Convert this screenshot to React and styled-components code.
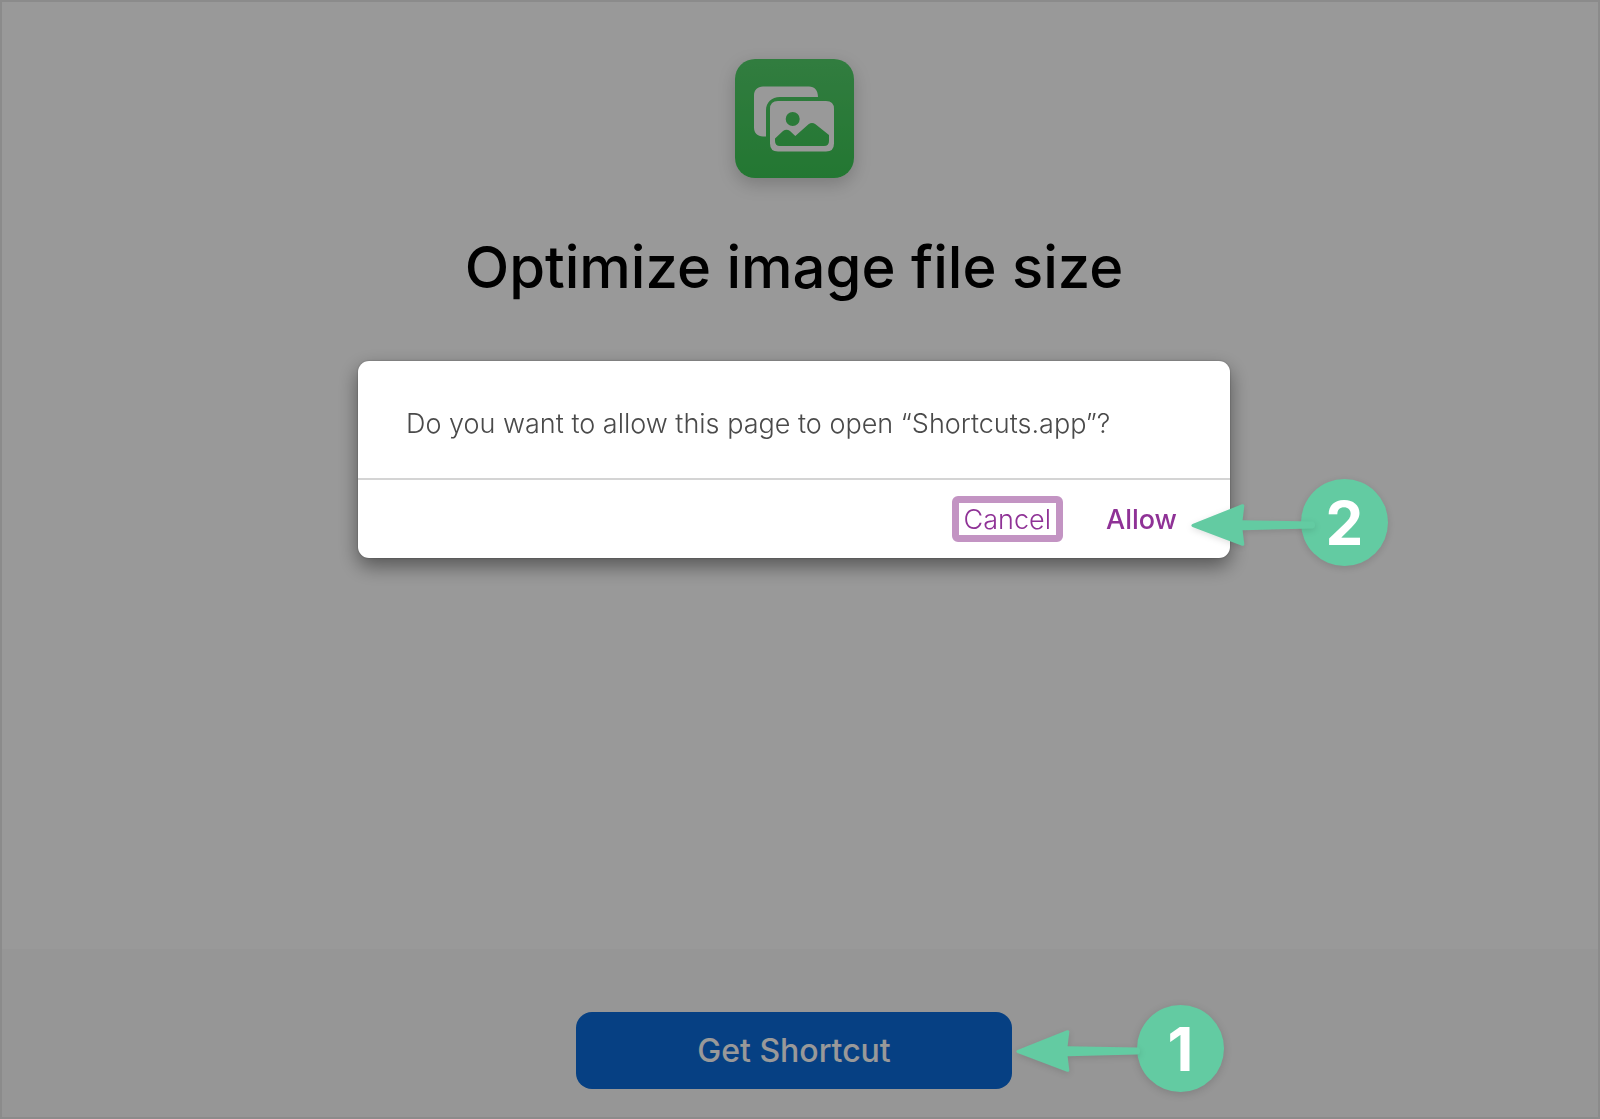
import React from "react";
import styled, { createGlobalStyle } from "styled-components";

const GlobalStyle = createGlobalStyle`
  *, *::before, *::after { box-sizing: border-box; }
  body {
    margin: 0;
    font-family: Inter, "Liberation Sans", sans-serif;
    background: #fff;
  }
`;

const MARK = "#63cba2";

const Page = styled.div`
  min-height: 100vh;
  display: flex;
  flex-direction: column;
  border: 2px solid #e8e8e8;
`;

const Main = styled.main`
  flex: 1;
  display: flex;
  flex-direction: column;
  align-items: center;
  gap: 51px;
  padding: 57px 14px 0 2px;
`;

const AppTile = styled.div`
  width: 119px;
  height: 119px;
  border-radius: 20px;
  background: linear-gradient(#53d06a, #3bc754);
  box-shadow: 0 6px 18px rgba(0, 0, 0, 0.2);
`;

const Title = styled.h1`
  margin: 0;
  font-size: 58px;
  line-height: 76px;
  font-weight: 500;
  color: #000;
  text-align: center;
`;

const Footer = styled.footer`
  display: flex;
  justify-content: center;
  padding: 63px 14px 28px 2px;
  background: #fafafa;
`;

const Anchor = styled.div`
  position: relative;
`;

const PrimaryButton = styled.button`
  width: 436px;
  height: 77px;
  border: 0;
  border-radius: 16px;
  background: #0a6bda;
  color: #fff;
  font: 500 32px/40px Inter, "Liberation Sans", sans-serif;
`;

const Backdrop = styled.div`
  position: fixed;
  inset: 0;
  z-index: 1;
  display: flex;
  justify-content: center;
  align-items: flex-start;
  padding: 361px 12px 0 0;
  background: rgba(0, 0, 0, 0.4);
`;

const Dialog = styled.div`
  position: relative;
  width: 872px;
  border-radius: 11px;
  background: #fff;
  box-shadow: 0 0 2px rgba(0, 0, 0, 0.35), 0 8px 20px rgba(0, 0, 0, 0.45);
`;

const Message = styled.p`
  margin: 0;
  padding: 45px 48px 36px;
  font-size: 27px;
  line-height: 36px;
  font-weight: 350;
  color: #4a4a4a;
`;

const Actions = styled.div`
  display: flex;
  justify-content: flex-end;
  gap: 31px;
  padding: 16px 41px 16px 48px;
  border-top: 2px solid #d4d4d4;
`;

const DialogButton = styled.button`
  height: 46px;
  padding: 2px 5px 0;
  border: 7px solid ${(p) => (p.$focused ? "#c394c3" : "transparent")};
  border-radius: 6px;
  background: transparent;
  color: #8f3296;
  font: ${(p) => (p.$strong ? 500 : 350)} 27px/30px Inter, "Liberation Sans", sans-serif;
  outline: none;
`;

const Callout = styled.div`
  position: absolute;
  z-index: 2;
  left: ${(p) => p.$left};
  top: ${(p) => p.$top};
  display: flex;
  align-items: center;
`;

const ArrowShape = styled.svg`
  position: relative;
  flex: none;
  display: block;
  z-index: 1;
  margin-right: ${(p) => p.$overlap};
  overflow: visible;
  filter: drop-shadow(0 2px 3px rgba(0, 0, 0, 0.12));
`;

const Badge = styled.span`
  flex: none;
  width: 87px;
  height: 87px;
  border-radius: 50%;
  display: grid;
  place-items: center;
  background: ${MARK};
  box-shadow: 0 2px 8px rgba(0, 0, 0, 0.15);
  color: #fff;
  font-size: 60px;
  line-height: 72px;
  font-weight: 700;
`;

function PhotosIcon() {
  return (
    <svg width="119" height="119" viewBox="0 0 119 119" aria-hidden="true">
      <path
        fill="#fff"
        d="M28 27.500H74C79.500 27.500 83 31.500 83 38H45C36.500 38 31 43.500 31 51.500V77.500H28C22.500 77.500 19 74 19 68.500V36.500C19 31 22.500 27.500 28 27.500Z"
      />
      <path
        fill="#fff"
        fillRule="evenodd"
        d="M43 42H91Q99 42 99 50V84.500Q99 92.500 91 92.500H43Q35 92.500 35 84.500V50Q35 42 43 42ZM57.700 53A7 7 0 1 0 57.700 67A7 7 0 1 0 57.700 53ZM40 79.500V82Q40 87 45 87H89Q94 87 94 82V76L80.500 65.200Q77 62.800 73.500 65.200L60.300 77L55 72Q51.500 69.500 48 72Z"
      />
    </svg>
  );
}

function Arrow({ overlap }) {
  return (
    <ArrowShape $overlap={overlap} width="124" height="44" viewBox="0 -2 124 44" aria-hidden="true">
      <path
        fill={MARK}
        d="M1.500 21L51 1.300Q53.500 .6 53.300 3L51.600 17.200L121 18.500Q124 18.700 124 22Q124 25.300 121 25.500L51.600 27.200L53.300 41Q53.500 43.400 51 42.700L1.500 24Q-.8 22.500 1.500 21Z"
      />
    </ArrowShape>
  );
}

export default function App() {
  return (
    <>
      <GlobalStyle />
      <Page>
        <Main>
          <AppTile>
            <PhotosIcon />
          </AppTile>
          <Title>Optimize image file size</Title>
        </Main>
        <Footer>
          <Anchor>
            <PrimaryButton type="button">Get Shortcut</PrimaryButton>
            <Callout $left="calc(100% + 4px)" $top="-7px">
              <Arrow overlap="-3px" />
              <Badge>1</Badge>
            </Callout>
          </Anchor>
        </Footer>
      </Page>
      <Backdrop>
        <Dialog role="dialog" aria-modal="true" aria-labelledby="dialog-message">
          <Message id="dialog-message">
            Do you want to allow this page to open “Shortcuts.app”?
          </Message>
          <Actions>
            <DialogButton type="button" $focused>Cancel</DialogButton>
            <DialogButton type="button" $strong>Allow</DialogButton>
          </Actions>
          <Callout $left="calc(100% - 39px)" $top="118px">
            <Arrow overlap="-14px" />
            <Badge>2</Badge>
          </Callout>
        </Dialog>
      </Backdrop>
    </>
  );
}
